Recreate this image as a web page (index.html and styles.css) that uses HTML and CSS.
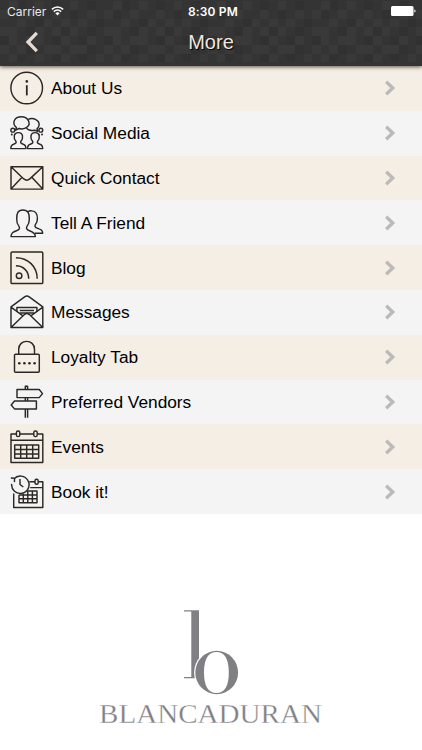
FILE: index.html
```html
<!DOCTYPE html>
<html lang="en">
<head>
<meta charset="UTF-8">
<meta name="viewport" content="width=device-width, initial-scale=1.0">
<title>More</title>
<link rel="stylesheet" href="styles.css">
</head>
<body>

<header class="header">
  <svg class="texture" width="422" height="66">
    <defs>
      <pattern id="checks" width="104" height="70" patternUnits="userSpaceOnUse">
        <g fill="#fff" fill-opacity=".022">
          <path d="M9 1h9v9h-9zM35 1h9v9h-9zM70 1h8v9h-8zM0 10h9v9H0zM26 10h9v9h-9zM52 10h9v9h-9zM87 10h9v9h-9zM17 19h9v8h-9zM44 19h8v8h-8zM61 19h9v8h-9zM78 19h9v8h-9z"/>
          <path d="M0 27h17v9H0zM35 27h9v9h-9zM52 27h9v9h-9zM70 27h8v9h-8zM9 36h8v9H9zM26 36h18v9H26zM61 36h9v9h-9zM87 36h9v9h-9zM0 45h9v9H0zM17 45h9v9h-9zM44 45h17v9H44zM70 45h17v9H70zM9 54h8v8H9zM35 54h9v8h-9zM61 54h9v8h-9zM96 54h8v8h-8z"/>
        </g>
        <g fill="#000" fill-opacity=".06">
          <path d="M18 1h8v9h-8zM52 1h9v9h-9zM87 1h9v9h-9zM9 10h8v9H9zM70 10h8v9h-8zM35 19h9v8h-9zM96 19h8v8h-8zM26 27h9v9h-9zM61 27h9v9h-9zM87 27h9v9h-9zM0 36h9v9H0zM52 36h9v9h-9zM78 36h9v9h-9zM26 45h9v9h-9zM87 45h9v9h-9zM17 54h9v8h-9zM52 54h9v8h-9zM78 54h9v8h-9z"/>
        </g>
      </pattern>
    </defs>
    <rect width="422" height="66" fill="url(#checks)"/>
  </svg>
  <div class="status">
    <div class="carrier">
      <span>Carrier</span>
      <svg width="13" height="10" viewBox="0 0 13 10" fill="none" stroke="#fff" stroke-width="1.5">
        <path d="M.9 3.4a8 8 0 0 1 11.2 0M2.9 5.6a5.1 5.1 0 0 1 7.2 0"/>
        <path d="M4.4 7.2a3 3 0 0 1 4.2 0L6.500 9.4z" fill="#fff" stroke="none"/>
      </svg>
    </div>
    <div class="clock">8:30 PM</div>
    <svg class="battery" width="25" height="10" viewBox="0 0 25 10" fill="#fff">
      <rect width="22.5" height="10" rx="1.5"/>
      <path d="M23.3 3.4q1.3.4 1.3 1.6t-1.3 1.6z"/>
    </svg>
  </div>
  <div class="navbar">
    <svg class="back" width="14" height="22" viewBox="0 0 14 22"><path d="M11.8 1.8L3 11l8.800 9.2" fill="none" stroke="#e4dad2" stroke-width="3.3"/></svg>
    <h1>More</h1>
  </div>
</header>

<ul class="menu">
  <li>
    <svg class="icon" viewBox="0 0 34 34">
      <circle cx="16.7" cy="17" r="15.8"/>
      <path d="M16.8 14.2v10.2" stroke-width="1.8"/>
      <circle class="dot" cx="16.8" cy="10.4" r="1.3"/>
    </svg>
    <span class="label">About Us</span>
    <svg class="chevron" viewBox="0 0 12 16"><path d="M2.2 1.700L8.700 8l-6.500 6.300"/></svg>
  </li>
  <li>
    <svg class="icon" viewBox="0 0 34 34">
      <path d="M5.600 14.200l.800-2.700C1.200 7.200 4.600.8 11.300.8s10.200 6.600 5.900 10.200c-2.200 1.800-5.400 2.300-8.200 1.500z"/>
      <path d="M18.200 3.300c5.300-2.200 11.400.9 10.900 5.700-.1 1.500-.9 2.900-2.100 3.900l.900 2.400-3.400-1.100c-3.500.9-6.900-.2-8.400-2.700"/>
      <circle cx="2.800" cy="14.200" r="1.900"/>
      <circle cx="30.800" cy="14.200" r="1.900"/>
      <circle class="dot" cx="1.800" cy="18.600" r="1"/>
      <circle class="dot" cx="4.600" cy="18.600" r=".8"/>
      <circle class="dot" cx="29" cy="18.600" r=".8"/>
      <circle class="dot" cx="32" cy="18.600" r="1"/>
      <path id="bust" d="M.8 32.600c0-3 1.200-4 3.400-4.600 1.900-.5 2.300-1.300 1.700-2.700-1.600-2-1.900-3.900-1.600-5.300.3-2.500 2-3.400 4.100-3.400s3.800.9 4.100 3.400c.3 1.400 0 3.300-1.600 5.300-.6 1.400-.2 2.200 1.700 2.700 2.200.6 3.400 1.600 3.400 4.600z"/>
      <use href="#bust" x="16.700"/>
    </svg>
    <span class="label">Social Media</span>
    <svg class="chevron" viewBox="0 0 12 16"><path d="M2.2 1.700L8.700 8l-6.500 6.300"/></svg>
  </li>
  <li>
    <svg class="icon" viewBox="0 0 34 34">
      <path d="M1 5.700h31.800v22.400H1zM1 5.700l12.800 12.200q3 2.500 6 0L32.800 5.700M1 28.100l11-11.800M32.800 28.100l-11-11.800"/>
    </svg>
    <span class="label">Quick Contact</span>
    <svg class="chevron" viewBox="0 0 12 16"><path d="M2.2 1.700L8.700 8l-6.500 6.300"/></svg>
  </li>
  <li>
    <svg class="icon" viewBox="0 0 34 34">
      <path d="M1 30.600c.1-3.800 2-4.800 5.500-5.900 3-.9 3.600-2.500 2.500-4.300-1.600-2-2.500-4-2.300-7.500C6.600 7.600 7.800 4 12.900 4s6.600 3.600 6.400 8.900c.1 3.500-.8 5.500-2.300 7.500-1.100 1.800-.5 3.400 2.500 4.300 3.500 1.100 5.800 2.100 5.900 5.900z"/>
      <path d="M17.800 6c1.200-1 2.700-1.300 4.100-1.100 4.400.4 5.600 3.600 5.500 7.900 0 2.600-.8 4.500-2.100 6-.8 1.700-.3 2.700 2.400 3.600 3.200 1 4.800 1.600 5 4.900h-7.900"/>
    </svg>
    <span class="label">Tell A Friend</span>
    <svg class="chevron" viewBox="0 0 12 16"><path d="M2.2 1.700L8.700 8l-6.500 6.300"/></svg>
  </li>
  <li>
    <svg class="icon" viewBox="0 0 34 34">
      <rect x="1" y="1" width="31.800" height="31.600" rx="1.200"/>
      <circle cx="9.100" cy="24.700" r="2.800"/>
      <path d="M5.900 14.800c7.300 0 12.800 5.200 12.800 12.900M5.900 6.700C18 6.700 27.200 15.500 27.200 27.700"/>
    </svg>
    <span class="label">Blog</span>
    <svg class="chevron" viewBox="0 0 12 16"><path d="M2.2 1.700L8.700 8l-6.500 6.300"/></svg>
  </li>
  <li>
    <svg class="icon" viewBox="0 0 34 34">
      <path d="M1 11.900v20.500h31.800V11.900L19.200 1.800q-2.300-1.500-4.600 0zM1 12.200l11.600 8.500M32.800 12.200l-11.600 8.500M1 32.400l13.400-12.800q2.500-2 5 0l13.400 12.800"/>
      <path d="M6.900 16.400v-4h20v4M9.800 15.400h14.200M9.800 18h14.200"/>
    </svg>
    <span class="label">Messages</span>
    <svg class="chevron" viewBox="0 0 12 16"><path d="M2.2 1.700L8.700 8l-6.500 6.300"/></svg>
  </li>
  <li>
    <svg class="icon" viewBox="0 0 34 34">
      <rect x="4.500" y="14.200" width="24.800" height="18" rx="1"/>
      <path d="M8.700 14V9.300c0-10.600 15.800-10.600 15.800 0V14"/>
      <g class="dot"><circle cx="9.300" cy="23.300" r="1.300"/><circle cx="14.400" cy="23.300" r="1.300"/><circle cx="19.500" cy="23.300" r="1.300"/><circle cx="24.600" cy="23.300" r="1.300"/></g>
    </svg>
    <span class="label">Loyalty Tab</span>
    <svg class="chevron" viewBox="0 0 12 16"><path d="M2.2 1.700L8.700 8l-6.500 6.300"/></svg>
  </li>
  <li>
    <svg class="icon" viewBox="0 0 34 34">
      <path d="M7 4.500h22.200l3.300 4.100-3.300 4H7zM26.400 16v7.900H4.500L1.200 20l3.300-4z"/>
      <path d="M15.300 4.500V1.300h2.300v3.200M15.300 12.600V16M17.600 12.600V16M15.300 24v8.800M17.600 24v8.800"/>
    </svg>
    <span class="label">Preferred Vendors</span>
    <svg class="chevron" viewBox="0 0 12 16"><path d="M2.2 1.700L8.700 8l-6.500 6.300"/></svg>
  </li>
  <li>
    <svg class="icon" viewBox="0 0 34 34">
      <path d="M6.200 3.900H1v28.500h31.800V3.900h-5.400M9.800 3.900h14M1 10.200h31.800"/>
      <rect x="6.400" y="1" width="3.400" height="5.600" rx="1.600"/>
      <rect x="23.800" y="1" width="3.400" height="5.600" rx="1.600"/>
      <path d="M4.700 15h24v13.300h-24zM4.700 19.400h24M4.700 23.900h24M10.700 15v13.300M16.700 15v13.300M22.700 15v13.300"/>
    </svg>
    <span class="label">Events</span>
    <svg class="chevron" viewBox="0 0 12 16"><path d="M2.2 1.700L8.700 8l-6.500 6.300"/></svg>
  </li>
  <li>
    <svg class="icon" viewBox="0 0 34 34">
      <path d="M4 3.800a8.700 8.700 0 1 1-2.300 5M.8 3l3.800.300-.2 3.800M10 4v5.500l3.300 2.500"/>
      <path d="M3.700 18.500v13.900h29.100V6.700h-4.400M25 6.700h-5.700M20.200 12.600h12.600"/>
      <rect x="25" y="4.200" width="3.200" height="5" rx="1.500"/>
      <path d="M17.800 16h9.200v11.700H9v-7.800M17.800 16v11.700M22.400 16v11.700M13.300 18.500v9.200M9 19.900h18M9 23.800h18"/>
    </svg>
    <span class="label">Book it!</span>
    <svg class="chevron" viewBox="0 0 12 16"><path d="M2.2 1.700L8.700 8l-6.500 6.300"/></svg>
  </li>
</ul>

<footer class="brand">
  <svg width="230" height="136" viewBox="0 0 230 136">
    <path d="M89 5.200h15v68H89v-1.300h7.300V6.500H89z"/>
    <ellipse class="halo" cx="121.700" cy="67.500" rx="22.600" ry="23"/>
    <path fill-rule="evenodd" d="M100.300 67.500a21.400 21.700 0 0 1 42.800 0a21.400 21.700 0 0 1-42.800 0zM109 67.500c0 14 4.500 20.600 12.500 20.600s12.300-6.600 12.300-20.600s-4.300-20.600-12.300-20.600s-12.500 6.600-12.500 20.600z"/>
    <text x="4" y="118" textLength="223" lengthAdjust="spacingAndGlyphs">BLANCADURAN</text>
  </svg>
</footer>

</body>
</html>
```
FILE: styles.css
```css
body {
  margin: 0;
  background: #fff;
  font-family: "Liberation Sans", Arial, sans-serif;
}
.header {
  position: relative;
  height: 66px;
  background: #343434;
  box-shadow: 0 1px 4px rgba(60, 45, 35, 0.8);
  z-index: 1;
}
.texture {
  position: absolute;
  top: 0;
  left: 0;
}
.status {
  position: relative;
  display: grid;
  grid-template-columns: 1fr auto 1fr;
  align-items: center;
  height: 22px;
  padding: 0 6px 0 7px;
  color: #fff;
  font-family: Inter, "Liberation Sans", sans-serif;
  font-size: 12px;
}
.carrier {
  display: flex;
  align-items: center;
  gap: 5px;
  color: #e8e8e8;
}
.clock {
  padding-left: 3px;
  font-weight: 600;
  letter-spacing: 0.15px;
}
.battery {
  justify-self: end;
}
.navbar {
  position: relative;
  display: grid;
  grid-template-columns: 64px 1fr 64px;
  align-items: center;
  height: 40px;
}
.back {
  margin-left: 25px;
}
.navbar h1 {
  margin: 0;
  color: #eee6df;
  font-size: 20px;
  font-weight: normal;
  text-align: center;
  text-shadow: 1px 1px 1px #000;
}
.menu {
  margin: 0;
  padding: 0;
  list-style: none;
}
.menu li {
  display: flex;
  align-items: center;
  height: 44.8px;
  padding: 0 26px 0 10px;
  background: #f4f4f4;
}
.menu li:nth-child(odd) {
  background: #f5eee4;
}
.icon {
  width: 34px;
  height: 34px;
  fill: none;
  stroke: #2b2827;
  stroke-width: 1.45;
  stroke-linejoin: round;
}
.icon .dot {
  fill: #2b2827;
  stroke: none;
}
.label {
  flex: 1;
  margin-left: 7px;
  padding-top: 1px;
  color: #000;
  font-size: 17.3px;
}
.chevron {
  width: 12px;
  height: 16px;
  fill: none;
  stroke: #bcbab8;
  stroke-width: 3.4;
}
.brand {
  display: flex;
  padding: 91px 0 0 95px;
}
.brand svg {
  fill: #808084;
}
.brand .halo {
  fill: #fff;
}
.brand text {
  font-family: "Liberation Serif", "Times New Roman", serif;
  font-size: 27px;
  stroke: #fff;
  stroke-width: 0.3px;
}
```
